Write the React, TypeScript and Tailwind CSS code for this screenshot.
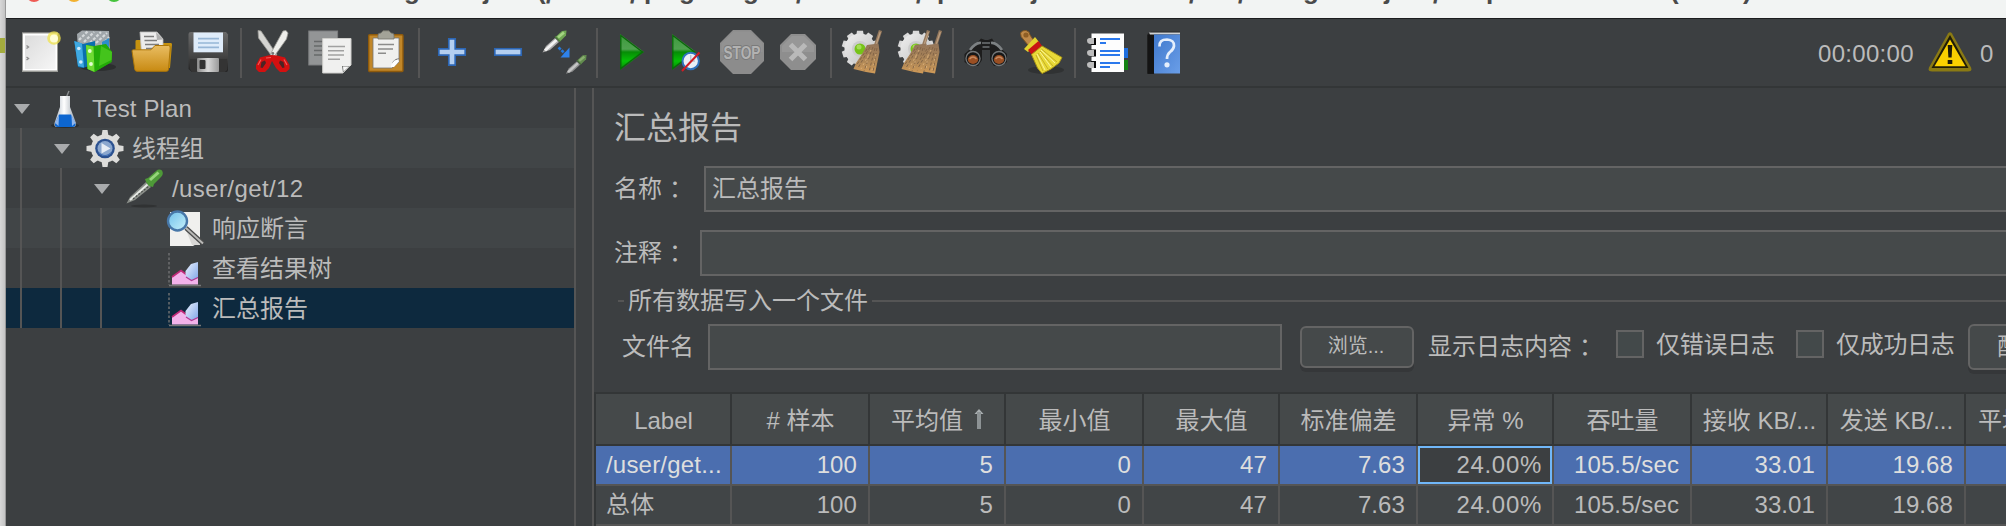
import type { ReactNode } from "react";

function Icon({ children }: { children?: ReactNode }) {
  return (
    <span className="flex w-14 shrink-0 justify-center">
      <svg width="44" height="44" viewBox="0 0 44 44" fill="none" className="overflow-visible">
        {children}
      </svg>
    </span>
  );
}

function Separator() {
  return (
    <span className="w-2.5 shrink-0 pl-1">
      <span className="-mt-0.5 block h-[50px] w-0.5 bg-[#555555]" />
    </span>
  );
}

function Gradients() {
  return (
    <svg width="0" height="0" className="absolute">
      <defs>
        <linearGradient id="paper" x1="0" y1="0" x2="1" y2="1">
          <stop offset="0" stopColor="#dcdcdc" />
          <stop offset="1" stopColor="#f6f6f6" />
        </linearGradient>
        <linearGradient id="folder" x1="0" y1="0" x2="0" y2="1">
          <stop offset="0" stopColor="#e9bd62" />
          <stop offset="1" stopColor="#c88a12" />
        </linearGradient>
        <linearGradient id="green" x1="0" y1="0" x2="0" y2="1">
          <stop offset="0" stopColor="#3c9a3c" />
          <stop offset="0.42" stopColor="#4fa24f" />
          <stop offset="0.5" stopColor="#068c06" />
          <stop offset="0.75" stopColor="#06c006" />
          <stop offset="1" stopColor="#068606" />
        </linearGradient>
        <linearGradient id="floppy" x1="0" y1="0" x2="0" y2="1">
          <stop offset="0" stopColor="#6a6a6a" />
          <stop offset="0.6" stopColor="#444" />
          <stop offset="1" stopColor="#222" />
        </linearGradient>
        <linearGradient id="metal" x1="0" y1="0" x2="1" y2="0">
          <stop offset="0" stopColor="#8a8a8a" />
          <stop offset="0.5" stopColor="#d8d8d8" />
          <stop offset="1" stopColor="#9a9a9a" />
        </linearGradient>
        <linearGradient id="bristle" x1="0" y1="0" x2="0" y2="1">
          <stop offset="0" stopColor="#927459" />
          <stop offset="0.6" stopColor="#b08857" />
          <stop offset="1" stopColor="#cf9a58" />
        </linearGradient>
        <linearGradient id="gear" x1="0" y1="0" x2="1" y2="1">
          <stop offset="0" stopColor="#f0f0f0" />
          <stop offset="1" stopColor="#bcbcbc" />
        </linearGradient>
        <linearGradient id="lens" x1="0" y1="0" x2="1" y2="1">
          <stop offset="0" stopColor="#6fc0ea" />
          <stop offset="1" stopColor="#c9f2fb" />
        </linearGradient>
        <linearGradient id="flask" x1="0" y1="0" x2="1" y2="0">
          <stop offset="0" stopColor="#aab4c0" />
          <stop offset="0.45" stopColor="#ffffff" />
          <stop offset="1" stopColor="#9aa3ad" />
        </linearGradient>
        <linearGradient id="book" x1="0" y1="0" x2="1" y2="1">
          <stop offset="0" stopColor="#3f78cc" />
          <stop offset="1" stopColor="#6a9ee8" />
        </linearGradient>
        <linearGradient id="area" x1="0" y1="0" x2="1" y2="1">
          <stop offset="0" stopColor="#eef4ff" />
          <stop offset="1" stopColor="#7fa6e8" />
        </linearGradient>
      </defs>
    </svg>
  );
}

const GEAR_ANGLES = [0, 36, 72, 108, 144, 180, 216, 252, 288, 324];

function Gear() {
  return (
    <>
      <g fill="#dadada">
        {GEAR_ANGLES.map((a) => (
          <path key={a} d="M14 7L15 0.800H21L22 7Z" transform={`rotate(${a} 18 19)`} />
        ))}
      </g>
      <circle cx="18" cy="19" r="15.500" fill="url(#gear)" />
      <circle cx="18" cy="19" r="8" fill="#cccccc" />
      <circle cx="18" cy="19" r="5.500" fill="#76c318" />
      <circle cx="17" cy="17" r="2.500" fill="#a4dd55" />
    </>
  );
}

function Besom({ x }: { x: number }) {
  return (
    <g transform={`translate(${x} 0)`}>
      <path d="M38.500 0.500L33 17" stroke="#92775c" strokeWidth="3.400" />
      <path d="M38.300 2L34 15" stroke="#bd9f80" strokeWidth="1.200" />
      <path d="M25 15L36.500 13.500L37.500 22L33 43.500L24 42L11.500 39L14 33L20 24Z" fill="url(#bristle)" />
      <path
        d="M28 17L16 38M31 17L22 41M33 18L27 42M35 18L31 42M25 19L14 36"
        stroke="#826447"
        strokeWidth="1"
        strokeDasharray="3 2"
      />
      <path d="M29 20L19 39M34 24L30 40M26 26L24 40" stroke="#ddb27c" strokeWidth="0.900" strokeDasharray="2 3" />
    </g>
  );
}

function Dropper() {
  return (
    <>
      <path d="M0.500 22.500L4 16L13 8L17 12L8 20Z" fill="#a9a9a9" />
      <path d="M3 20.500L14.500 10" stroke="#f2f2f2" strokeWidth="3" />
      <path d="M13.500 7L20 1L24.500 0.500L24 5.500L17.500 12Z" fill="#6fa653" />
      <path d="M16 7.500L22 2.500" stroke="#a4d482" strokeWidth="2.600" />
      <path d="M13 6.500L18 11.500" stroke="#4d7a3c" strokeWidth="1.200" />
    </>
  );
}

function Toolbar() {
  return (
    <div className="flex h-[69px] shrink-0 border-b-2 border-[#333637] pt-[11px] pl-1.5">
      {/* New */}
      <Icon>
        <rect x="4" y="2.3" width="36" height="39.7" fill="#9a9b97" />
        <rect x="5" y="3.5" width="34" height="37" fill="#fff" />
        <rect x="7" y="5.5" width="30.5" height="33.5" fill="url(#paper)" />
        <path d="M8.5 15.5l2 1.5-2 1.5M8.5 27l2 1.5-2 1.5" stroke="#8d8d8d" strokeWidth="1.4" />
        <circle cx="36" cy="8" r="6.8" fill="#f0e34a" opacity="0.75" />
        <circle cx="36" cy="8.5" r="4" fill="#fffdd4" />
      </Icon>
      {/* Templates */}
      <Icon>
        <ellipse cx="24" cy="37" rx="18" ry="4" fill="#2c2e2f" />
        <path d="M3 4L8 0.5L35 1L36 21H4Z" fill="#a0a6aa" />
        <path d="M5 10L14 1M10 12L20 2M16 13L27 2M22 13L33 3M28 15L35 7" stroke="#d4d8da" strokeWidth="2.2" strokeDasharray="3 1.5" />
        <path d="M28 12L35 8V20L28 18Z" fill="#2d8ecb" />
        <path d="M0.3 11L9 14L21 11V34L9 38L4 37Z" fill="#0a6fae" />
        <path d="M0.3 11L8 13.5L10 37.5L4 36Z" fill="#3fa9e2" />
        <circle cx="4.8" cy="18.5" r="1.8" fill="#cfeafa" />
        <circle cx="6.8" cy="32" r="1.8" fill="#cfeafa" />
        <path d="M12 15L20 16L32 14L38 22L37.5 32L20.5 42L13.5 39Z" fill="#2aa40a" />
        <path d="M20 16.5L32 14.5L38 22L37.5 32L20.5 42Z" fill="#23ab08" />
        <path d="M27 16L38 22L37.5 30L25 36Z" fill="#44c41c" />
        <path d="M12 15L19.5 16.5L20.5 42L13.5 39Z" fill="#6edb33" />
        <circle cx="15.8" cy="21" r="1.9" fill="#e4ffd4" />
        <circle cx="17" cy="34" r="1.9" fill="#e4ffd4" />
      </Icon>
      {/* Open */}
      <Icon>
        <path d="M5.5 11Q5.5 10 7 10H18L20 13H41Q42 13 42 14.5L40 38H5.5Z" fill="#c6920f" />
        <path d="M10 2H27L33 9V23H11.5Z" fill="#ececec" stroke="#bdbdbd" strokeWidth="0.8" />
        <path d="M26 2L27 10L33 9.5Z" fill="#b0b0b0" />
        <path d="M14 6.5H24M14.5 10.5H27M15 14.5H29M16 18.5H30" stroke="#7c7c7c" strokeWidth="1.5" />
        <path d="M2 21Q2 19.8 3.5 19.8H21L25 15.5H38.5Q40.5 15.5 40.2 18L38.5 39.5Q38.3 41.3 36.5 41.3H7Q5.2 41.3 4.8 39.5Z" fill="url(#folder)" stroke="#ad7608" />
      </Icon>
      {/* Save */}
      <Icon>
        <path d="M5 2H40L42 4.5V40Q42 42 40 42H6L2.5 39V4Q2.5 2 5 2Z" fill="url(#floppy)" />
        <path d="M4 29H41V40L39 42H6L4 39Z" fill="#343434" />
        <rect x="7.5" y="2.5" width="29.5" height="19.8" fill="#dfecfa" />
        <path d="M12 8.7H33M12 13H33M12 17.3H33" stroke="#97b6d6" strokeWidth="1.7" />
        <rect x="11" y="28" width="22" height="14" rx="1" fill="url(#metal)" />
        <rect x="13.5" y="30" width="6" height="9" rx="1" fill="#333" />
      </Icon>
      <Separator />
      {/* Cut */}
      <Icon>
        <path d="M6 0.5L9 1L25 25L21 29L17.5 23L6.5 8Z" fill="#d5d5d2" stroke="#9a9a96" strokeWidth="0.8" />
        <path d="M34 0.5L36 3L34.5 9L21 28L18.5 24L31 1Z" fill="#eeeeeb" stroke="#9a9a96" strokeWidth="0.8" />
        <circle cx="20.8" cy="23.5" r="1.4" fill="#777" />
        <path d="M20 25L16 25.500L8 27.500L4 35V39L7 42H13L17 38L20 31L24 38L28 42H34L37.500 39V35L33 27.500L25 25.500Z" fill="#d31010" />
        <path d="M9.500 32L13 30.500L14 33L10.500 38L8.500 37.500ZM31.500 32L28 30.500L27 33L30.500 38L32.500 37.500Z" fill="#4a2424" />
        <path d="M9 29.500L6 35M32 29.500L35 35M14 28L19 27.500" stroke="#f25a5a" strokeWidth="1.200" />
      </Icon>
      {/* Copy */}
      <Icon>
        <rect x="0.8" y="1" width="28.8" height="34" fill="#939596" stroke="#7d7f80" />
        <path d="M6 11.5H16M6 16H14M6 20.5H14M6 25H14" stroke="#67696a" strokeWidth="1.6" />
        <path d="M14.7 8.5H43V35L35 43H14.7Z" fill="#f0f0ef" stroke="#cfcfcc" />
        <path d="M20 16.5H37M20 20.8H36M20 25H36M20 29.3H32" stroke="#a1a1a1" strokeWidth="1.6" />
        <path d="M34 36H42L35 42.5Z" fill="#6e706f" />
        <path d="M35 36.5H41L35.5 41.5Z" fill="#f7f7f7" />
      </Icon>
      {/* Paste */}
      <Icon>
        <rect x="4.7" y="4.7" width="34.3" height="36.8" rx="1" fill="#c18729" stroke="#8e5a0c" strokeWidth="1.4" />
        <path d="M9 8H35V32L28 38H9Z" fill="#f0f0ee" stroke="#777" strokeWidth="0.8" />
        <path d="M14 14.5H30M14 19H29M14 23.3H22" stroke="#8c8c8a" strokeWidth="1.6" />
        <path d="M28 37.5V33Q31 28 35 28.5V32Z" fill="#62615e" />
        <path d="M27 37Q27 31 34.5 29L35 31.5L30 37Z" fill="#fff" />
        <path d="M14 9V5Q14 3 17 3L19 0.8H25L27 3Q30 3 30 5V9Z" fill="#a3a398" stroke="#74746a" strokeWidth="0.8" />
      </Icon>
      <Separator />
      {/* Expand */}
      <Icon>
        <path d="M18.8 8.8H25.2V18.8H35.2V25.2H25.2V35.2H18.8V25.2H8.8V18.8H18.8Z" fill="#b4cff0" stroke="#2c66b4" strokeWidth="1.7" />
      </Icon>
      {/* Collapse */}
      <Icon>
        <rect x="8.8" y="18.8" width="26.4" height="6.4" fill="#b4cff0" stroke="#2c66b4" strokeWidth="1.7" />
      </Icon>
      {/* Toggle */}
      <Icon>
        <Dropper />
        <path d="M16.5 17.5L23 23.5" stroke="#2478dc" strokeWidth="2.6" strokeDasharray="3 1" />
        <path d="M27.5 17.5V27.5H18.5Z" fill="#2f82ea" />
        <g transform="translate(23.5 24.5) scale(0.86)" opacity="0.75">
          <Dropper />
        </g>
      </Icon>
      <Separator />
      {/* Start */}
      <Icon>
        <path d="M12 4L36 22L12 40Z" fill="url(#green)" />
        <path d="M12.8 5.5L34.5 22L12.8 38.5Z" stroke="#0b640b" strokeWidth="1.3" />
      </Icon>
      {/* Start no pauses */}
      <Icon>
        <path d="M8 4L32 22L8 40Z" fill="url(#green)" />
        <path d="M8.8 5.5L30.5 22L8.8 38.5Z" stroke="#0b640b" strokeWidth="1.3" />
        <circle cx="26.7" cy="31" r="8.2" fill="#e9eff7" stroke="#2f72bd" strokeWidth="2" />
        <path d="M26.7 25V31H31" stroke="#b9c6d4" strokeWidth="1.4" />
        <path d="M18 41L35.5 22.5" stroke="#cf1d26" strokeWidth="2" />
      </Icon>
      {/* Stop */}
      <Icon>
        <path d="M13 0H31L44 13V31L31 44H13L0 31V13Z" fill="#8c8c8c" />
        <path d="M13.6 1.5H30.4L42.5 13.6V22H1.5V13.6Z" fill="#929292" />
        <text x="22" y="29" textAnchor="middle" textLength="37" lengthAdjust="spacingAndGlyphs" fontSize="19" fontWeight="bold" fontFamily="Liberation Sans, sans-serif" fill="#b2b2b2" stroke="#7a7a7a" strokeWidth="2" paintOrder="stroke">STOP</text>
      </Icon>
      {/* Shutdown */}
      <Icon>
        <path d="M15 4H29L40 15V29L29 40H15L4 29V15Z" fill="#8e8e8e" />
        <path d="M16 6H28L38 16V22H6V16Z" fill="#979797" />
        <path d="M14.5 14.5L29.5 29.5M29.5 14.5L14.5 29.5" stroke="#b9b9b9" strokeWidth="5" />
      </Icon>
      <Separator />
      {/* Clear */}
      <Icon>
        <Gear />
        <Besom x={0} />
      </Icon>
      {/* Clear all */}
      <Icon>
        <Gear />
        <Besom x={-8} />
        <Besom x={4} />
      </Icon>
      <Separator />
      {/* Search */}
      <Icon>
        <path d="M13 13L17 8.5L21 10H24L28 8.5L31 13L43 24V32L38 36H30L26 30V20H18V30L14 36H6L0.5 32V24Z" fill="#1d1d1d" />
        <path d="M6 20Q12 12 17 13M38 20Q32 12 27 13" stroke="#7d8183" strokeWidth="2.6" />
        <path d="M18 13H26M18.5 17H25.5" stroke="#5a5d5f" strokeWidth="2" />
        <circle cx="9" cy="28.5" r="7" fill="#171717" stroke="#74787a" strokeWidth="1.3" />
        <circle cx="35" cy="28.5" r="7" fill="#171717" stroke="#74787a" strokeWidth="1.3" />
        <ellipse cx="9" cy="29.5" rx="5.2" ry="4.4" fill="#9a4f23" />
        <ellipse cx="35" cy="29.5" rx="5.2" ry="4.4" fill="#9a4f23" />
        <path d="M5.5 29Q9 25 12.5 29M31.5 29Q35 25 38.5 29" stroke="#c88a60" strokeWidth="1.4" />
      </Icon>
      {/* Reset search */}
      <Icon>
        <ellipse cx="26" cy="40" rx="18" ry="4" fill="#303233" />
        <path d="M0.5 3Q2 0 6 0.5Q10 1.5 10 5L14 11L8 15L3 9Q0.5 7 0.5 3Z" fill="#c08a4a" stroke="#7d5420" />
        <circle cx="6" cy="5" r="2.6" fill="#8f5e25" />
        <path d="M4 19L15 7L19 12L8 22Z" fill="#e2d22e" />
        <path d="M8 20L18.5 11L22.5 16.5L12 25Z" fill="#c81414" />
        <path d="M11.5 24.5L22 16L42 27.5L39 33L31 39L22 43.5L17.5 38Z" fill="#e9da38" stroke="#a89416" />
        <path d="M16 25L23 41M18 23L28 39M20 21L33 36M21.5 19L37 32" stroke="#c4af24" strokeWidth="1" />
        <path d="M17 24L25 40M20 22L31 37M21 20L35 33" stroke="#fbf59a" strokeWidth="1" />
      </Icon>
      <Separator />
      {/* Function helper */}
      <Icon>
        <rect x="36" y="18" width="6" height="10" fill="#1f6fe0" />
        <rect x="36" y="30" width="6" height="10" fill="#138313" />
        <rect x="5.5" y="3.5" width="32.5" height="38.5" fill="#fdfdfd" />
        <path d="M5 11.5H10M5 23H10M5 34.5H10" stroke="#0a0a0a" strokeWidth="7" />
        <path d="M1 10.5Q1 7.5 5 8H8V14H4Q1 13.5 1 10.5ZM1 22.5Q1 19.5 5 20H8V26H4Q1 25.5 1 22.5ZM1 34.5Q1 31.5 5 32H8V38H4Q1 37.5 1 34.5Z" fill="#bdbdbd" />
        <path d="M14 9H34M14 21H34M14 33H34" stroke="#2a78ec" strokeWidth="2" />
        <path d="M14 13H20M14 25H34M14 37H24" stroke="#2a78ec" strokeWidth="2" />
      </Icon>
      {/* Help */}
      <Icon>
        <path d="M5.5 4L9 1.7H38V4L12 44H5.5Z" fill="#1b1b1b" />
        <path d="M7 2.5H38V4.5H8Z" fill="#cfd2d4" />
        <rect x="5.5" y="5" width="6.5" height="38.5" fill="#141414" />
        <rect x="12" y="4.5" width="26" height="39" fill="url(#book)" />
        <path d="M17.5 16.5Q17 9.5 25 9.5Q32.5 10 32 16Q31.5 19.5 28 22Q25 24.5 25 29" stroke="#e4eefc" strokeWidth="2.7" />
        <circle cx="25" cy="34.8" r="2.6" fill="#e4eefc" />
      </Icon>
      <div className="ml-auto flex h-[44px] w-[188px] shrink-0 items-center text-[24px]">
        <span className="w-[110px] pt-[4px] tracking-[0.3px]">00:00:00</span>
        <svg width="44" height="44" viewBox="0 0 44 44" fill="none" className="shrink-0">
          <path d="M20 3.5Q22 1 24 3.5L43 37.5Q44.5 41.5 40 41.5H4Q-0.5 41.5 1 37.5Z" fill="#8a7a14" />
          <path d="M22 5L40.5 38H3.5Z" fill="#1f1c08" />
          <path d="M22 9.5L37.5 36.2H6.5Z" fill="#fad000" />
          <path d="M19.7 15H24.3L23.6 27.5H20.4Z" fill="#1d1a08" />
          <rect x="19.7" y="30" width="4.6" height="4" fill="#1d1a08" />
        </svg>
        <span className="pt-[4px] pl-[8px]">0</span>
      </div>
    </div>
  );
}

function FlaskIcon() {
  return (
    <>
      <ellipse cx="19" cy="37.5" rx="14" ry="2.5" fill="#2b2d2e" />
      <path d="M20 10L23 3" stroke="#8a8d8f" strokeWidth="1.4" />
      <path d="M14 8H24V19L30 35Q30.5 39 27 39H11Q7.5 39 8.5 35L14 19Z" fill="url(#flask)" />
      <path d="M13 26.5H25L29.5 36Q29.5 39 26.5 39H11.5Q8.5 39 9 36Z" fill="#0d66d0" />
      <path d="M9 35L13 27L12.5 38ZM29.5 35L25.5 27L26 38Z" fill="#8fb6ee" />
    </>
  );
}

function ThreadGroupIcon() {
  return (
    <>
      <g fill="#dcdcda">
        {[0, 45, 90, 135, 180, 225, 270, 315].map((a) => (
          <path key={a} d="M15.5 8L16.5 2H21.5L22.5 8Z" transform={`rotate(${a} 19 20.5)`} />
        ))}
        <circle cx="19" cy="20.5" r="14" />
      </g>
      <circle cx="19" cy="20.5" r="9.8" fill="#2b5190" />
      <circle cx="19" cy="20.5" r="7.5" fill="#8ba7ce" />
      <path d="M12 23Q19 31 26 23Q24 28 19 28Q14 28 12 23Z" fill="#3d6db5" />
      <path d="M15.5 15L24.5 20.5L15.5 25.5Z" fill="#e6ecf4" />
    </>
  );
}

function SamplerIcon() {
  return (
    <>
      <ellipse cx="18" cy="38" rx="13" ry="1.5" fill="#303233" />
      <path d="M0.5 35.5L4 29L20 14L25 19L9 32Z" fill="#8b8f8a" />
      <path d="M4 32L21.5 16.5" stroke="#e8ebe6" strokeWidth="2" />
      <path d="M7 31L23 18" stroke="#4a4e4a" strokeWidth="1.2" strokeDasharray="2 1.5" />
      <path d="M19 11L22 10L30 3Q33 0.5 36 2.5Q38 6 35 9L28 16L27 19L23 18L20 14Z" fill="#4e9a38" />
      <path d="M24 12L32.5 4.5" stroke="#96d67a" strokeWidth="3" />
    </>
  );
}

function AssertionIcon() {
  return (
    <>
      <path d="M4 4H34V34L27 38H4Z" fill="#f0f0ee" />
      <path d="M20 22L26 37H34V30Z" fill="#d8d8d6" />
      <path d="M20 20L37 35.5" stroke="#4a4b4b" strokeWidth="4.5" />
      <path d="M20 20L37 35.5" stroke="#b9b9b7" strokeWidth="2" />
      <circle cx="11.5" cy="13" r="9.5" fill="url(#lens)" stroke="#4777a8" strokeWidth="2.4" />
    </>
  );
}

function ChartIcon() {
  return (
    <>
      <path d="M3 5V37" stroke="#6d6f70" strokeWidth="1.5" strokeDasharray="2.5 2" />
      <path d="M3 37.5H35" stroke="#777" strokeWidth="1.5" />
      <path d="M6 36.5V29L15 22.5L21 27L26 25L32 30V36.5Z" fill="#f2b2ea" />
      <path d="M6 29L15 22.5L21 27" stroke="#c02a78" strokeWidth="1.6" />
      <path d="M32 14V29.5L26 32.5L19.5 28V23L25 16Z" fill="url(#area)" />
      <path d="M20 29L25.5 32.5L32 29.5" stroke="#b03a94" strokeWidth="1.2" />
    </>
  );
}

type TreeItem = { label: string; depth: number; open?: boolean; icon: ReactNode; tone: string };

const TREE: TreeItem[] = [
  { label: "Test Plan", depth: 0, open: true, icon: <FlaskIcon />, tone: "bg-[#3c3f41] tracking-[0.15px]" },
  { label: "线程组", depth: 1, open: true, icon: <ThreadGroupIcon />, tone: "bg-[#414547]" },
  { label: "/user/get/12", depth: 2, open: true, icon: <SamplerIcon />, tone: "bg-[#3c3f41] tracking-[0.4px]" },
  { label: "响应断言", depth: 3, icon: <AssertionIcon />, tone: "bg-[#414547]" },
  { label: "查看结果树", depth: 3, icon: <ChartIcon />, tone: "bg-[#3c3f41]" },
  { label: "汇总报告", depth: 3, icon: <ChartIcon />, tone: "bg-[#0d293e]" },
];

function Tree() {
  return (
    <div className="w-[570px] shrink-0 border-r-2 border-[#555555]">
      {TREE.map((item) => (
        <div key={item.label} className={`flex h-10 items-center ${item.tone}`}>
          {Array.from({ length: item.depth }, (_, i) => (
            <span key={i} className="h-10 w-10 shrink-0 pl-[14px]">
              <span className="block h-10 w-0.5 bg-[#555555]" />
            </span>
          ))}
          <span className="w-10 shrink-0 pl-2">
            {item.open && (
              <svg width="16" height="10" viewBox="0 0 16 10" className="mt-0.5">
                <path d="M0 0H16L8 10Z" fill="#a9abad" />
              </svg>
            )}
          </span>
          <svg width="38" height="40" viewBox="0 0 38 40" fill="none" className="shrink-0">
            {item.icon}
          </svg>
          <span className="pt-0.5 pl-2 text-[24px] leading-[38px] whitespace-nowrap">{item.label}</span>
        </div>
      ))}
    </div>
  );
}

const HEADERS = ["Label", "# 样本", "平均值", "最小值", "最大值", "标准偏差", "异常 %", "吞吐量", "接收 KB/...", "发送 KB/...", "平均字节数"];
const ROWS = [
  ["/user/get...", "100", "5", "0", "47", "7.63", "24.00%", "105.5/sec", "33.01", "19.68", ""],
  ["总体", "100", "5", "0", "47", "7.63", "24.00%", "105.5/sec", "33.01", "19.68", ""],
];
const COLS = "grid grid-cols-[136px_138px_136px_138px_136px_138px_136px_138px_136px_138px_138px]";

function cellSpacing(i: number) {
  if (i === 0) return "pl-[10px] tracking-[0.2px]";
  if (i === 6) return "justify-end pr-[10px] tracking-[0.7px]";
  return "justify-end pr-[11px] tracking-[0.1px]";
}

function ReportTable() {
  return (
    <div className="overflow-hidden border-t-2 border-l-2 border-[#333637] whitespace-nowrap">
      <div className={`${COLS} h-[52px] border-b-2 border-[#333637] bg-[#45494a]`}>
        {HEADERS.map((h, i) => (
          <div key={h} className={`flex items-center overflow-hidden border-r-2 border-[#333637] pt-[3px] ${i === 10 ? "pl-3" : "justify-center pl-px"}`}>
            {h}
            {i === 2 && (
              <svg width="10" height="20" viewBox="0 0 10 20" className="-mt-1 ml-[11px]">
                <path d="M5 0L9.5 5H0.5Z" fill="#aab0b2" />
                <rect x="3" y="3" width="4" height="17" fill="#8d9395" />
              </svg>
            )}
          </div>
        ))}
      </div>
      {ROWS.map((row, r) => (
        <div key={row[0]} className={`${COLS} h-10 border-b-2 border-[#555555] ${r === 0 ? "bg-[#4b6eaf] text-[#dedede]" : "bg-[#414547]"}`}>
          {row.map((v, i) => (
            <div key={i} className="border-r-2 border-[#555555]">
              <div
                className={`flex h-full items-center ${cellSpacing(i)} ${
                  r === 0 && i === 6 ? "bg-[#3c3f41] text-[#bbbbbb] outline-2 -outline-offset-2 outline-[#70b7f9]" : ""
                }`}
              >
                {v}
              </div>
            </div>
          ))}
        </div>
      ))}
    </div>
  );
}

function Colon() {
  return <span className="ml-[7px]">：</span>;
}

function Report() {
  return (
    <div className="ml-4 min-w-0 flex-1 overflow-hidden border-l-2 border-[#555555] text-[24px] leading-[36px] whitespace-nowrap">
      <h1 className="h-[78px] pt-[16px] pl-5 text-[32px] leading-[48px]">汇总报告</h1>
      <div className="flex h-16">
        <label className="w-[110px] shrink-0 pt-[5px] pl-5">
          名称
          <Colon />
        </label>
        <div className="h-[46px] flex-1 border-2 border-r-0 border-[#646464] bg-[#45494a] pt-[3px] pl-[6px]">汇总报告</div>
      </div>
      <div className="flex h-[46px]">
        <label className="w-[106px] shrink-0 pt-[5px] pl-5">
          注释
          <Colon />
        </label>
        <div className="h-[46px] flex-1 border-2 border-r-0 border-[#646464] bg-[#45494a]" />
      </div>
      <div className="flex h-12 items-center pl-6">
        <span className="mt-0.5 h-0.5 w-1.5 bg-[#555555]" />
        <span className="px-1 pt-0.5">所有数据写入一个文件</span>
        <span className="mt-0.5 h-0.5 flex-1 bg-[#555555]" />
      </div>
      <div className="flex h-[68px] items-start pl-7">
        <span className="w-[86px] shrink-0 pt-[5px]">文件名</span>
        <div className="h-[46px] w-[574px] shrink-0 border-2 border-[#646464] bg-[#45494a]" />
        <button className="mt-0.5 ml-[18px] flex h-[42px] w-[114px] shrink-0 items-center justify-center rounded-md border-2 border-[#646464] bg-[#45494a] pr-0.5 pb-0.5 text-[20px] shadow-[0_4px_0_#353739]">浏览...</button>
        <span className="ml-[14px] w-[188px] shrink-0 pt-[5px]">
          显示日志内容
          <Colon />
        </span>
        <span className="mt-1.5 h-7 w-7 shrink-0 border-2 border-[#646464] bg-[#43494a]" />
        <span className="w-[152px] shrink-0 pt-[3px] pl-3 tracking-[-0.3px]">仅错误日志</span>
        <span className="mt-1.5 h-7 w-7 shrink-0 border-2 border-[#646464] bg-[#43494a]" />
        <span className="w-[144px] shrink-0 pt-[3px] pl-3 tracking-[-0.3px]">仅成功日志</span>
        <button className="flex h-[46px] w-[106px] shrink-0 items-center justify-center rounded-md border-2 border-[#646464] bg-[#45494a] shadow-[0_4px_0_#353739]">配置</button>
      </div>
      <ReportTable />
    </div>
  );
}

function TitleBar() {
  return (
    <div className="h-[19px] shrink-0 overflow-hidden border-b border-[#1c1c1e] bg-[#f2f4f3]">
      <div className="-mt-[10px] flex pl-[20px]">
        <span className="mr-[24px] h-3 w-4 rounded-b-full bg-[#ee5b54]" />
        <span className="mr-[24px] h-3 w-4 rounded-b-full bg-[#f2b12f]" />
        <span className="h-3 w-4 rounded-b-full bg-[#45c33c]" />
        <div className="-mt-[15px] flex pl-[282px] text-[26px] leading-[30px] font-semibold text-[#4a4a4a]">
          <span className="w-[79px]">g</span>
          <span className="w-[54px]">j</span>
          <span className="w-[9px]">(</span>
          <span className="w-[84px] pt-1">/</span>
          <span className="w-[14px] pt-1">/</span>
          <span className="w-[35px]">p</span>
          <span className="w-[64px]">g</span>
          <span className="w-[53px]">g</span>
          <span className="w-[120px] pt-1">/</span>
          <span className="w-[21px] pt-1">/</span>
          <span className="w-[94px]">p</span>
          <span className="w-[158px]">j</span>
          <span className="w-[49px] pt-1">/</span>
          <span className="w-[65px] pt-1">/</span>
          <span className="w-[81px]">g</span>
          <span className="w-[49px]">j</span>
          <span className="w-[53px] pt-1">/</span>
          <span className="w-[184px]">p</span>
          <span className="w-[73px]">(</span>
          <span>)</span>
        </div>
      </div>
    </div>
  );
}

export default function App() {
  return (
    <div className="flex h-[526px] w-[2006px] overflow-hidden bg-[#3c3f41] font-['Liberation_Sans','Noto_Sans_CJK_SC',sans-serif] text-[#bbbbbb]">
      <Gradients />
      <div className="w-1.5 shrink-0 border-r border-[#999999] bg-gradient-to-r from-[#d8d8d8] to-[#c4c4c4] pt-[38px]">
        <div className="h-[15px] bg-[#a3ab3e]" />
      </div>
      <div className="flex min-w-0 flex-1 flex-col">
        <TitleBar />
        <Toolbar />
        <div className="flex min-h-0 flex-1">
          <Tree />
          <Report />
        </div>
      </div>
    </div>
  );
}
